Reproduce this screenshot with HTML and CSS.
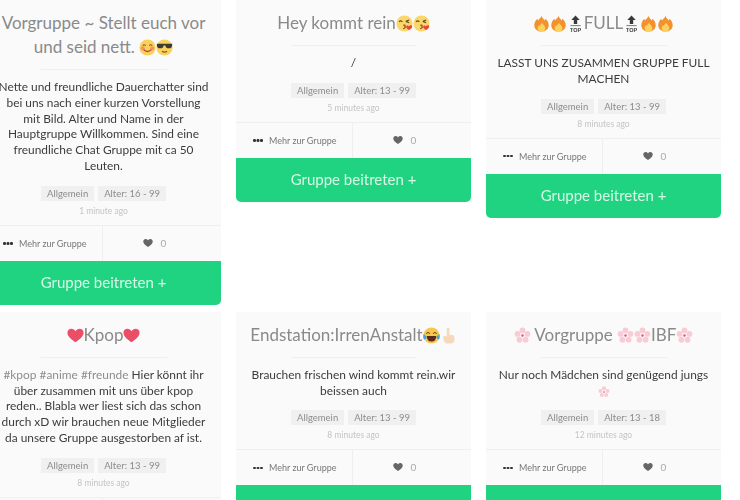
FILE: index.html
```html
<!DOCTYPE html>
<html lang="de">
    <head>
        <meta charset="UTF-8" />
        <meta name="viewport" content="width=device-width, initial-scale=1.0" />
        <title>Gruppen</title>
        <link rel="stylesheet" href="styles.css">
    </head>
    <body>
        <svg class="sprites" width="0" height="0" aria-hidden="true">
            <symbol id="e-smile" viewBox="0 0 20 20">
                <circle cx="10" cy="10" r="9.500" fill="#f8d25c" />
                <circle cx="4.500" cy="11" r="2.400" fill="#f0946a" />
                <circle cx="15.500" cy="11" r="2.400" fill="#f0946a" />
                <path d="M4.500 8q1.500-2.500 3.500 0M12 8q2-2.500 3.500 0" fill="none" stroke="#8a5a1c" stroke-width="1.200" />
                <path d="M5.500 12.500q4.500 4.500 9 0" fill="none" stroke="#b5462c" stroke-width="1.600" />
            </symbol>
            <symbol id="e-cool" viewBox="0 0 20 20">
                <circle cx="10" cy="10" r="9.500" fill="#f8d25c" />
                <path d="M1 5.500h18v2q-.5 3.500-4 3.500t-4-3.500h-2q-.5 3.500-4 3.500t-4-3.500z" fill="#3c3a36" />
                <path d="M7 14.500q3 2 6 0" fill="none" stroke="#8a5a1c" stroke-width="1.300" />
            </symbol>
            <symbol id="e-kiss" viewBox="0 0 20 20">
                <circle cx="10" cy="10" r="9.500" fill="#f9d76a" />
                <path d="M3.500 8q2-2 4 0M11.500 7.500l4-1.500M11.500 7.500l4 1.500" fill="none" stroke="#6b4a1c" stroke-width="1.300" />
                <path d="M8.500 12q3-1 2 1.500q1.500 1.500-2 2.500" fill="none" stroke="#8a3a1c" stroke-width="1.300" />
                <path d="M15 13.500c-1-1.800-3.500-1-3 1c.3 1.300 2 2.500 3.500 3c1.500-.8 3.500-2.300 3.500-3.800c0-2-2.800-2-4-.2z" fill="#e8453c" />
            </symbol>
            <symbol id="e-fire" viewBox="0 0 20 20">
                <path d="M10 1c.5 2.500 2.500 3.500 3.500 5.500c.8-.5 1-1.200 1.200-2c2 2 3.800 4.500 3.800 7.500c0 4.500-3.800 7.500-8.500 7.500S1.500 16.500 1.500 12c0-3 1.800-5.500 3.500-7.500c.2 1 .6 1.500 1.200 2C7 4.500 9.500 3.500 10 1z" fill="#f2912e" />
                <path d="M10.500 9c.5 1.500 4 3.500 4 6.500c0 2.500-2.200 4-4.500 4s-4.500-1.500-4.500-4c0-1.500 1-3 1.800-3.800c.2.700.5 1 1 1.300c-.2-1.500 1.500-2.800 2.700-4z" fill="#fcd25e" />
            </symbol>
            <symbol id="e-top" viewBox="0 0 20 20">
                <path d="M10 .5l5 5.500h-3v4.500H8V6H5z" fill="#3a3a3a" />
                <path d="M4 12.500h12" stroke="#3a3a3a" stroke-width=".8" />
                <text x="10" y="19.500" text-anchor="middle" font-family="'Liberation Sans', sans-serif" font-size="6.500" font-weight="700" fill="#3a3a3a">TOP</text>
            </symbol>
            <symbol id="e-heart" viewBox="0 0 20 20">
                <path d="M10 18C5 14.500 .5 11 .5 6.800C.5 3.800 2.800 2 5.200 2C7.200 2 9 3 10 5c1-2 2.800-3 4.800-3c2.400 0 4.700 1.800 4.700 4.800C19.500 11 15 14.500 10 18z" fill="#ec4d67" />
            </symbol>
            <symbol id="e-joy" viewBox="0 0 20 20">
                <circle cx="10" cy="10" r="9.500" fill="#f7c94b" />
                <path d="M4 8q2-3 4 0M12 8q2-3 4 0" fill="none" stroke="#6b4a1c" stroke-width="1.300" />
                <path d="M4.500 10.500h11q0 6.500-5.500 6.500t-5.500-6.500z" fill="#5b2a1c" />
                <path d="M1 8q-1.500 4 0 6.500q3 .5 3.500-3q-2-1-3.500-3.500zM19 8q1.500 4 0 6.500q-3 .5-3.500-3q2-1 3.500-3.500z" fill="#4aa3df" />
            </symbol>
            <symbol id="e-point" viewBox="0 0 20 20">
                <path d="M8 1.500q1.500-1.500 3 0V9l4 .5q2 .5 2 2.500v3q0 4-4.500 4.500H9q-3.500 0-4.500-4L3.500 12q0-1.500 1.500-1.500L8 11z" fill="#f6d9bd" />
            </symbol>
            <symbol id="e-flower" viewBox="0 0 20 20">
                <g fill="#f8ccd6">
                    <circle cx="10" cy="4" r="3.400" />
                    <circle cx="4.200" cy="8.200" r="3.400" />
                    <circle cx="15.800" cy="8.200" r="3.400" />
                    <circle cx="6.400" cy="15" r="3.400" />
                    <circle cx="13.600" cy="15" r="3.400" />
                </g>
                <circle cx="10" cy="10" r="2.800" fill="#fbeef0" />
                <circle cx="10" cy="10" r="1.400" fill="#dd5f7a" />
            </symbol>
            <symbol id="i-heart" viewBox="0 0 20 20">
                <path d="M10 18C5 14.500 .5 11 .5 6.800C.5 3.800 2.800 2 5.200 2C7.200 2 9 3 10 5c1-2 2.800-3 4.800-3c2.400 0 4.700 1.800 4.700 4.800C19.500 11 15 14.500 10 18z" fill="#666" />
            </symbol>
        </svg>

        <div class="groups">
            <article class="card">
                <h2 class="card-title">Vorgruppe ~ Stellt euch vor und seid nett. <svg class="emoji"><use href="#e-smile" /></svg><svg class="emoji"><use href="#e-cool" /></svg></h2>
                <p class="card-desc">Nette und freundliche Dauerchatter sind bei uns nach einer kurzen Vorstellung mit Bild. Alter und Name in der Hauptgruppe Willkommen. Sind eine freundliche Chat Gruppe mit ca 50 Leuten.</p>
                <div class="tags"><span class="tag">Allgemein</span><span class="tag">Alter: 16 - 99</span></div>
                <div class="time">1 minute ago</div>
                <div class="card-foot">
                    <a class="more"><span class="dots"></span>Mehr zur Gruppe</a>
                    <span class="likes"><svg class="like-icon"><use href="#i-heart" /></svg>0</span>
                </div>
                <a class="join">Gruppe beitreten +</a>
            </article>

            <article class="card">
                <h2 class="card-title">Hey kommt rein<svg class="emoji"><use href="#e-kiss" /></svg><svg class="emoji"><use href="#e-kiss" /></svg></h2>
                <p class="card-desc">/</p>
                <div class="tags"><span class="tag">Allgemein</span><span class="tag">Alter: 13 - 99</span></div>
                <div class="time">5 minutes ago</div>
                <div class="card-foot">
                    <a class="more"><span class="dots"></span>Mehr zur Gruppe</a>
                    <span class="likes"><svg class="like-icon"><use href="#i-heart" /></svg>0</span>
                </div>
                <a class="join">Gruppe beitreten +</a>
            </article>

            <article class="card">
                <h2 class="card-title"><svg class="emoji"><use href="#e-fire" /></svg><svg class="emoji"><use href="#e-fire" /></svg><svg class="emoji"><use href="#e-top" /></svg>FULL<svg class="emoji"><use href="#e-top" /></svg><svg class="emoji"><use href="#e-fire" /></svg><svg class="emoji"><use href="#e-fire" /></svg></h2>
                <p class="card-desc">LASST UNS ZUSAMMEN GRUPPE FULL MACHEN</p>
                <div class="tags"><span class="tag">Allgemein</span><span class="tag">Alter: 13 - 99</span></div>
                <div class="time">8 minutes ago</div>
                <div class="card-foot">
                    <a class="more"><span class="dots"></span>Mehr zur Gruppe</a>
                    <span class="likes"><svg class="like-icon"><use href="#i-heart" /></svg>0</span>
                </div>
                <a class="join">Gruppe beitreten +</a>
            </article>

            <article class="card">
                <h2 class="card-title"><svg class="emoji"><use href="#e-heart" /></svg>Kpop<svg class="emoji"><use href="#e-heart" /></svg></h2>
                <p class="card-desc"><span class="hashtags">#kpop #anime #freunde</span> Hier könnt ihr über zusammen mit uns über kpop reden.. Blabla wer liest sich das schon durch xD wir brauchen neue Mitglieder da unsere Gruppe ausgestorben af ist.</p>
                <div class="tags"><span class="tag">Allgemein</span><span class="tag">Alter: 13 - 99</span></div>
                <div class="time">8 minutes ago</div>
                <div class="card-foot">
                    <a class="more"><span class="dots"></span>Mehr zur Gruppe</a>
                    <span class="likes"><svg class="like-icon"><use href="#i-heart" /></svg>0</span>
                </div>
                <a class="join">Gruppe beitreten +</a>
            </article>

            <article class="card">
                <h2 class="card-title">Endstation:IrrenAnstalt<svg class="emoji"><use href="#e-joy" /></svg><svg class="emoji"><use href="#e-point" /></svg></h2>
                <p class="card-desc">Brauchen frischen wind kommt rein.wir beissen auch</p>
                <div class="tags"><span class="tag">Allgemein</span><span class="tag">Alter: 13 - 99</span></div>
                <div class="time">8 minutes ago</div>
                <div class="card-foot">
                    <a class="more"><span class="dots"></span>Mehr zur Gruppe</a>
                    <span class="likes"><svg class="like-icon"><use href="#i-heart" /></svg>0</span>
                </div>
                <a class="join">Gruppe beitreten +</a>
            </article>

            <article class="card">
                <h2 class="card-title"><svg class="emoji"><use href="#e-flower" /></svg> Vorgruppe <svg class="emoji"><use href="#e-flower" /></svg><svg class="emoji"><use href="#e-flower" /></svg>IBF<svg class="emoji"><use href="#e-flower" /></svg></h2>
                <p class="card-desc">Nur noch Mädchen sind genügend jungs <svg class="emoji emoji-small"><use href="#e-flower" /></svg></p>
                <div class="tags"><span class="tag">Allgemein</span><span class="tag">Alter: 13 - 18</span></div>
                <div class="time">12 minutes ago</div>
                <div class="card-foot">
                    <a class="more"><span class="dots"></span>Mehr zur Gruppe</a>
                    <span class="likes"><svg class="like-icon"><use href="#i-heart" /></svg>0</span>
                </div>
                <a class="join">Gruppe beitreten +</a>
            </article>
        </div>
    </body>
</html>
```

FILE: styles.css
```css
html,
body {
    margin: 0;
    height: 500px;
    overflow: hidden;
    background: white;
}

body {
    font-family: Lato, "Open Sans", sans-serif;
}

.sprites {
    display: block;
    height: 0;
}

.groups {
    display: grid;
    grid-template-columns: repeat(3, 235px);
    column-gap: 15px;
    row-gap: 7px;
    align-items: start;
    margin-left: -14px;
    filter: blur(0.45px);
}

.card {
    background: #fafafa;
    border-radius: 0 0 5px 5px;
}

.card-title {
    margin: 0;
    padding: 11px 6px 0;
    font-size: 17px;
    font-weight: 400;
    line-height: 24px;
    text-align: center;
    color: #8a8a8a;
}

.card-title::after {
    content: "";
    display: block;
    width: 126px;
    height: 1px;
    margin: 10px auto 0;
    background: #efefef;
}

.emoji {
    width: 17px;
    height: 17px;
    vertical-align: -3px;
}

.emoji-small {
    width: 12px;
    height: 12px;
}

.card-desc {
    margin: 9px 11px 12px;
    font-size: 11.900px;
    line-height: 15.800px;
    text-align: center;
    color: #3c3c3c;
}

.hashtags {
    color: #8d8d8d;
}

.tags {
    display: flex;
    justify-content: center;
    gap: 4px;
}

.tag {
    padding: 0 6px;
    height: 15px;
    font-size: 9.500px;
    line-height: 15px;
    color: #8c8c8c;
    background: #f0f0f0;
}

.time {
    margin-top: 4px;
    height: 12px;
    font-size: 8.500px;
    line-height: 12px;
    text-align: center;
    color: #c4c4c4;
}

.card-foot {
    display: grid;
    grid-template-columns: 117px 1fr;
    height: 35px;
    margin-top: 8px;
    border-top: 1px solid #efefef;
}

.more {
    display: flex;
    align-items: center;
    padding-left: 17px;
    font-size: 9px;
    color: #777;
    border-right: 1px solid #efefef;
}

.dots {
    width: 2.500px;
    height: 2.500px;
    margin: 0 13.500px 0 0;
    border-radius: 50%;
    background: #333;
    box-shadow: 3.500px 0 0 #333, 7px 0 0 #333;
}

.likes {
    display: flex;
    align-items: center;
    justify-content: center;
    gap: 8px;
    padding-right: 15px;
    padding-bottom: 1px;
    font-size: 10px;
    color: #aaa;
}

.like-icon {
    width: 10px;
    height: 10px;
}

.join {
    display: block;
    height: 44px;
    font-size: 15px;
    font-weight: 400;
    line-height: 43px;
    text-align: center;
    color: #d6f7e6;
    background: #20d380;
    border-radius: 0 0 5px 5px;
}
```
